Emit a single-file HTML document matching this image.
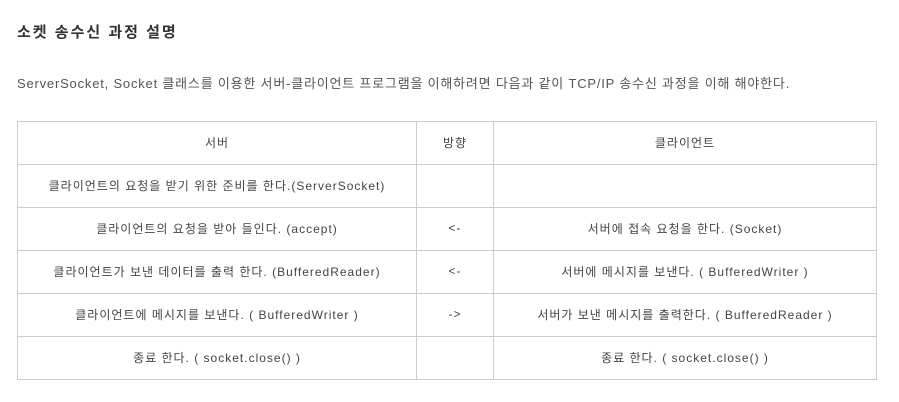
<!DOCTYPE html>
<html><head><meta charset="utf-8"><style>
body{margin:0;background:#fff;width:899px;height:402px;overflow:hidden;font-family:"Liberation Sans","Noto Sans CJK KR","NanumGothic",sans-serif;}
h3{position:absolute;left:17px;top:23px;margin:0;font-size:15px;font-weight:bold;color:#333;line-height:20px;letter-spacing:2px;}
p{position:absolute;left:17px;top:75px;margin:0;font-size:13px;color:#555;line-height:18px;letter-spacing:0.8px;}
table{position:absolute;left:17px;top:121px;border-collapse:collapse;table-layout:fixed;width:859px;}
td{border:1px solid #ccc;height:40px;padding:0 0 2px 0;text-align:center;font-size:12px;color:#444;letter-spacing:1px;white-space:nowrap;}
</style></head><body>
<h3>소켓 송수신 과정 설명</h3>
<p>ServerSocket, Socket 클래스를 이용한 서버-클라이언트 프로그램을 이해하려면 다음과 같이 TCP/IP 송수신 과정을 이해 해야한다.</p>
<table>
<colgroup><col style="width:399px"><col style="width:77px"><col style="width:383px"></colgroup>
<tr><td>서버</td><td>방향</td><td>클라이언트</td></tr>
<tr><td>클라이언트의 요청을 받기 위한 준비를 한다.(ServerSocket)</td><td></td><td></td></tr>
<tr><td>클라이언트의 요청을 받아 들인다. (accept)</td><td>&lt;-</td><td>서버에 접속 요청을 한다. (Socket)</td></tr>
<tr><td>클라이언트가 보낸 데이터를 출력 한다. (BufferedReader)</td><td>&lt;-</td><td>서버에 메시지를 보낸다. ( BufferedWriter )</td></tr>
<tr><td>클라이언트에 메시지를 보낸다. ( BufferedWriter )</td><td>-&gt;</td><td>서버가 보낸 메시지를 출력한다. ( BufferedReader )</td></tr>
<tr><td>종료 한다. ( socket.close() )</td><td></td><td>종료 한다. ( socket.close() )</td></tr>
</table>
</body></html>
